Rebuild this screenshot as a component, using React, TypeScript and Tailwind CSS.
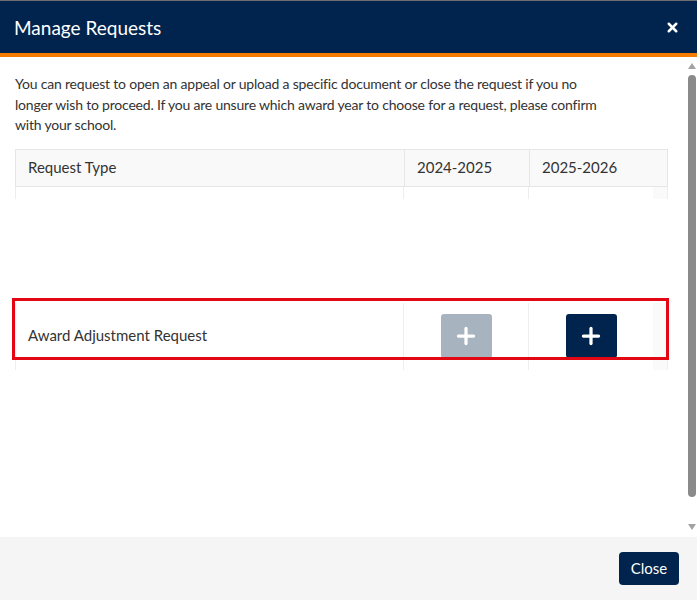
import { X, Plus } from 'lucide-react';

function App() {
  return (
    <div className="w-[697px] h-[600px] flex flex-col bg-white overflow-hidden font-['Lato',sans-serif] text-[#333]">
      <header className="h-[57px] shrink-0 bg-[#00244d] border-t border-[#6e6e6e] border-b-4 border-b-[#f57c00] flex items-center justify-between pl-[14px] pr-[17px]">
        <h1 className="text-[19px] text-white leading-none">Manage Requests</h1>
        <X className="w-[15px] h-[15px] text-white" strokeWidth={4} />
      </header>

      <div className="flex-1 flex min-h-0">
        <main className="flex-1 pl-[15px] pr-[18px] pt-[17px]">
          <p className="w-[650px] text-[14px] tracking-[-0.2px] leading-[20.5px]">
            You can request to open an appeal or upload a specific document or close the request if you no
            <br />
            longer wish to proceed. If you are unsure which award year to choose for a request, please confirm
            <br />
            with your school.
          </p>

          <div className="mt-[13px] w-[653px]">
            <div className="grid grid-cols-[388px_125px_140px] h-[38px] bg-[#f9f9f9] border border-[#e6e6e6] text-[15px]">
              <div className="flex items-center px-3">Request Type</div>
              <div className="flex items-center px-3 border-l border-[#e6e6e6]">2024-2025</div>
              <div className="flex items-center px-3 border-l border-[#e6e6e6]">2025-2026</div>
            </div>

            <div className="grid grid-cols-[388px_125px_125px_15px] h-[12px]">
              <div className="border-l border-[#eee]" />
              <div className="border-l border-[#eee]" />
              <div className="border-l border-[#eee]" />
              <div className="bg-[#fafafa] border-r border-[#eee]" />
            </div>
            <div className="h-[104px]" />
            <div className="relative grid grid-cols-[388px_125px_125px_15px] h-[67px]">
              <div className="flex items-center px-3 border-l border-[#eee] text-[15px] pb-[2px]">
                Award Adjustment Request
              </div>
              <div className="flex justify-center pt-[11px] border-l border-[#eee]">
                <button className="w-[51px] h-[44px] rounded-[3px] bg-[#a7b3bf] flex items-center justify-center">
                  <Plus className="w-[26px] h-[26px] text-white" strokeWidth={3} />
                </button>
              </div>
              <div className="flex justify-center pt-[11px] border-l border-[#eee]">
                <button className="w-[51px] h-[44px] rounded-[3px] bg-[#00244d] flex items-center justify-center">
                  <Plus className="w-[26px] h-[26px] text-white" strokeWidth={3} />
                </button>
              </div>
              <div className="bg-[#fafafa] border-r border-[#eee]" />
              <div className="absolute left-[-3px] right-[-1px] top-[-5px] h-[62px] border-[3px] border-[#e30613]" />
            </div>
          </div>
        </main>

        <div className="w-[11px] shrink-0 flex flex-col items-center pt-[6px] pb-[7px]">
          <div className="w-0 h-0 border-x-[4px] border-x-transparent border-b-[6px] border-b-[#a3a3a3]" />
          <div className="mt-[6px] w-[8px] h-[422px] rounded-full bg-[#8a8a8a]" />
          <div className="flex-1" />
          <div className="w-0 h-0 border-x-[4px] border-x-transparent border-t-[6px] border-t-[#a3a3a3]" />
        </div>
      </div>

      <footer className="h-[63px] shrink-0 bg-[#f5f5f5] flex items-center justify-end pr-[18px]">
        <button className="w-[60px] h-[33px] rounded-[4px] bg-[#00244d] text-white text-[15px]">Close</button>
      </footer>
    </div>
  );
}

export default App;
